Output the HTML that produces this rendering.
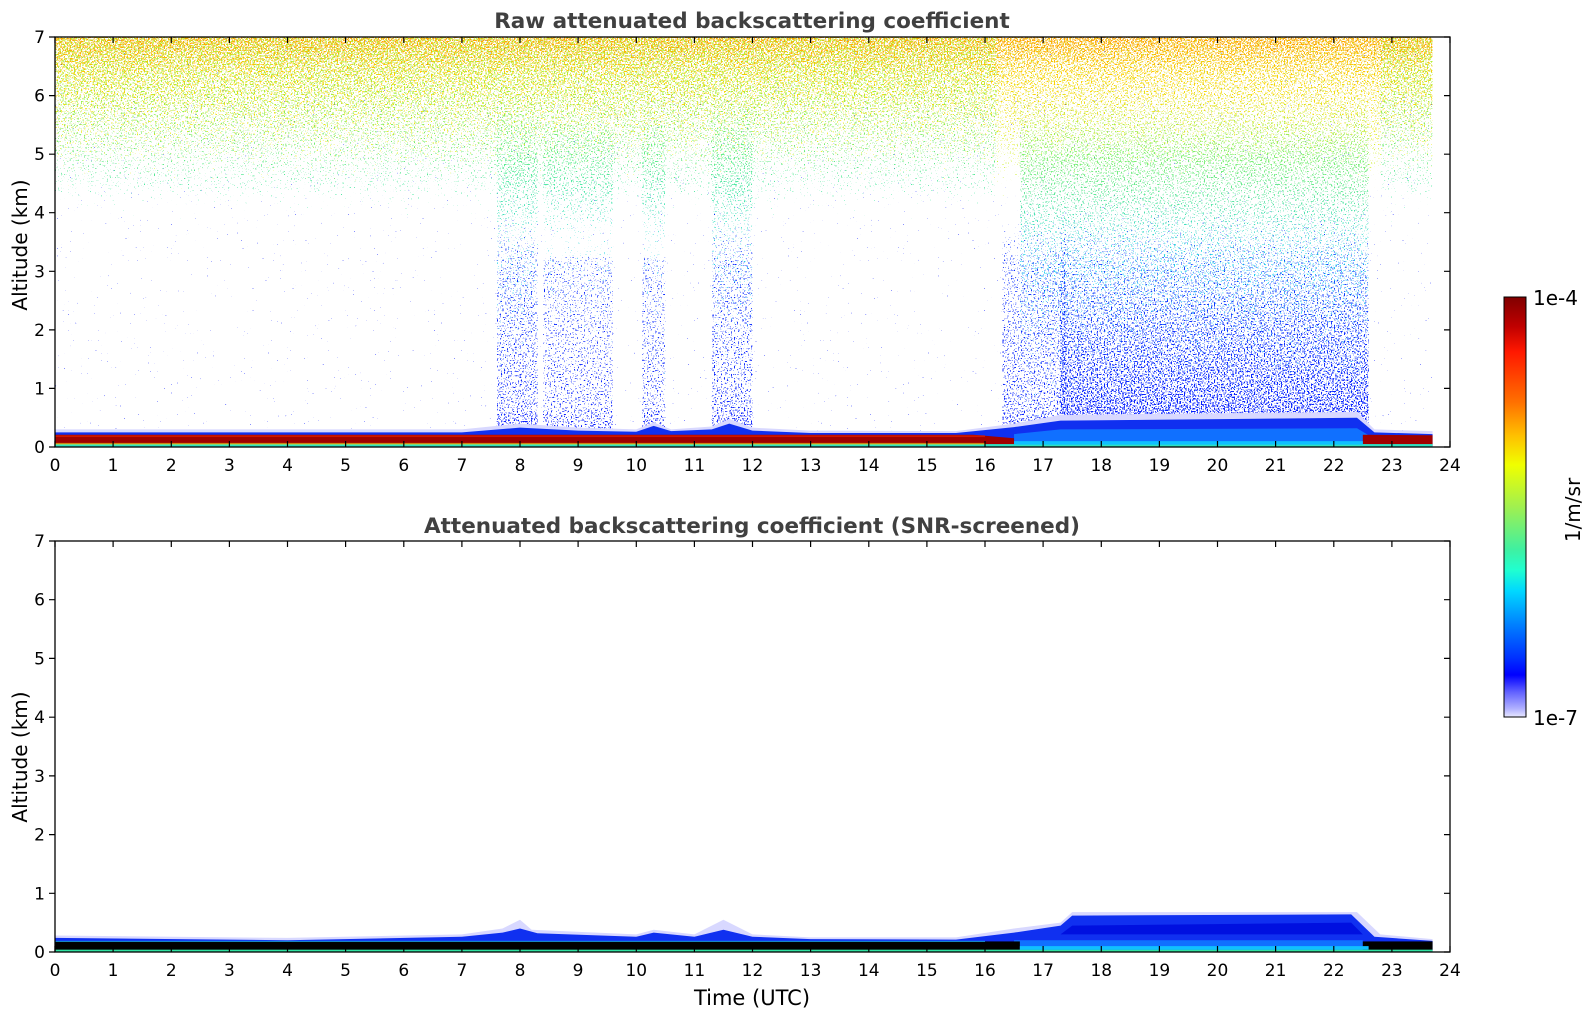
<!DOCTYPE html>
<html><head><meta charset="utf-8"><style>
html,body{margin:0;padding:0;background:#fff}
svg{display:block}
text{font-family:"DejaVu Sans","Liberation Sans",sans-serif}
</style></head><body>
<svg width="1595" height="1020" viewBox="0 0 1595 1020" xmlns="http://www.w3.org/2000/svg">
<defs>
<filter id="d1" x="0" y="0" width="1" height="1" color-interpolation-filters="sRGB"><feTurbulence type="fractalNoise" baseFrequency="0.7" numOctaves="1" seed="1" result="n"/><feColorMatrix in="n" type="matrix" values="0 0 0 0 0 0 0 0 0 0 0 0 0 0 0 0.5 0 0 0 0" result="nr"/><feComposite in="SourceAlpha" in2="nr" operator="arithmetic" k1="0" k2="0.2" k3="1" k4="0" result="sum"/><feColorMatrix in="sum" type="matrix" values="0 0 0 0 0 0 0 0 0 0 0 0 0 0 0 0 0 0 60 -26.7" result="m"/><feColorMatrix in="SourceGraphic" type="matrix" values="1 0 0 0 0 0 1 0 0 0 0 0 1 0 0 0 0 0 0 1" result="op"/><feComposite in="op" in2="m" operator="in"/></filter>
<filter id="d2" x="0" y="0" width="1" height="1" color-interpolation-filters="sRGB"><feTurbulence type="fractalNoise" baseFrequency="0.7" numOctaves="1" seed="7" result="n"/><feColorMatrix in="n" type="matrix" values="0 0 0 0 0 0 0 0 0 0 0 0 0 0 0 0.5 0 0 0 0" result="nr"/><feComposite in="SourceAlpha" in2="nr" operator="arithmetic" k1="0" k2="0.2" k3="1" k4="0" result="sum"/><feColorMatrix in="sum" type="matrix" values="0 0 0 0 0 0 0 0 0 0 0 0 0 0 0 0 0 0 60 -26.7" result="m"/><feColorMatrix in="SourceGraphic" type="matrix" values="1 0 0 0 0 0 1 0 0 0 0 0 1 0 0 0 0 0 0 1" result="op"/><feComposite in="op" in2="m" operator="in"/></filter>
<filter id="d3" x="0" y="0" width="1" height="1" color-interpolation-filters="sRGB"><feTurbulence type="fractalNoise" baseFrequency="0.7" numOctaves="1" seed="13" result="n"/><feColorMatrix in="n" type="matrix" values="0 0 0 0 0 0 0 0 0 0 0 0 0 0 0 0.5 0 0 0 0" result="nr"/><feComposite in="SourceAlpha" in2="nr" operator="arithmetic" k1="0" k2="0.2" k3="1" k4="0" result="sum"/><feColorMatrix in="sum" type="matrix" values="0 0 0 0 0 0 0 0 0 0 0 0 0 0 0 0 0 0 60 -26.7" result="m"/><feColorMatrix in="SourceGraphic" type="matrix" values="1 0 0 0 0 0 1 0 0 0 0 0 1 0 0 0 0 0 0 1" result="op"/><feComposite in="op" in2="m" operator="in"/></filter>
<linearGradient id="gY" gradientUnits="userSpaceOnUse" x1="0" y1="0" x2="0" y2="7"><stop offset="0.57" stop-color="#e8f020" stop-opacity="0"/><stop offset="0.714" stop-color="#e8f020" stop-opacity="0.5"/><stop offset="0.9" stop-color="#ffd000" stop-opacity="0.8"/><stop offset="1" stop-color="#ffa000" stop-opacity="1"/></linearGradient>
<linearGradient id="gG" gradientUnits="userSpaceOnUse" x1="0" y1="0" x2="0" y2="7"><stop offset="0.5" stop-color="#40e8b0" stop-opacity="0"/><stop offset="0.643" stop-color="#50e8a0" stop-opacity="0.55"/><stop offset="0.857" stop-color="#a0f040" stop-opacity="0.75"/><stop offset="1" stop-color="#c0f030" stop-opacity="0.85"/></linearGradient>
<linearGradient id="gRY" gradientUnits="userSpaceOnUse" x1="0" y1="0" x2="0" y2="7"><stop offset="0.5" stop-color="#c0f030" stop-opacity="0"/><stop offset="0.7" stop-color="#d0f030" stop-opacity="0.55"/><stop offset="1" stop-color="#e0e020" stop-opacity="0.7"/></linearGradient>
<linearGradient id="gRC" gradientUnits="userSpaceOnUse" x1="0" y1="0" x2="0" y2="7"><stop offset="0.14" stop-color="#10a0ff" stop-opacity="0.45"/><stop offset="0.43" stop-color="#20d0f0" stop-opacity="0.66"/><stop offset="0.71" stop-color="#60f090" stop-opacity="0.58"/><stop offset="0.86" stop-color="#90f060" stop-opacity="0"/></linearGradient>
<linearGradient id="gRB" gradientUnits="userSpaceOnUse" x1="0" y1="0" x2="0" y2="7"><stop offset="0.04" stop-color="#0010ff" stop-opacity="1"/><stop offset="0.1" stop-color="#0020ff" stop-opacity="0.85"/><stop offset="0.29" stop-color="#1040ff" stop-opacity="0.7"/><stop offset="0.45" stop-color="#1060ff" stop-opacity="0.45"/><stop offset="0.6" stop-color="#1060ff" stop-opacity="0"/></linearGradient>
<linearGradient id="gPB" gradientUnits="userSpaceOnUse" x1="0" y1="0" x2="0" y2="7"><stop offset="0.04" stop-color="#0010ff" stop-opacity="0.8"/><stop offset="0.1" stop-color="#1030ff" stop-opacity="0.62"/><stop offset="0.43" stop-color="#1040ff" stop-opacity="0.5"/><stop offset="0.6" stop-color="#1060ff" stop-opacity="0"/></linearGradient>
<linearGradient id="gPC" gradientUnits="userSpaceOnUse" x1="0" y1="0" x2="0" y2="7"><stop offset="0.14" stop-color="#10a0ff" stop-opacity="0.35"/><stop offset="0.43" stop-color="#20d0f0" stop-opacity="0.56"/><stop offset="0.71" stop-color="#60f090" stop-opacity="0.45"/><stop offset="0.85" stop-color="#60f090" stop-opacity="0"/></linearGradient>
<linearGradient id="cb" x1="0" y1="0" x2="0" y2="1">
<stop offset="0" stop-color="#800000"/><stop offset="0.07" stop-color="#c00000"/><stop offset="0.13" stop-color="#ff1800"/><stop offset="0.25" stop-color="#ff7000"/><stop offset="0.33" stop-color="#ffc000"/><stop offset="0.4" stop-color="#f0ff00"/><stop offset="0.5" stop-color="#a0f050"/><stop offset="0.6" stop-color="#40f0a0"/><stop offset="0.65" stop-color="#20ffd0"/><stop offset="0.7" stop-color="#00d8ff"/><stop offset="0.78" stop-color="#0080ff"/><stop offset="0.86" stop-color="#0030ff"/><stop offset="0.9" stop-color="#0000ff"/><stop offset="0.94" stop-color="#6060ff"/><stop offset="0.98" stop-color="#b0b0ff"/><stop offset="1" stop-color="#e8e8ff"/></linearGradient>
</defs>

<!-- ===== TOP PLOT ===== -->
<g filter="url(#d1)"><g transform="translate(55,447) scale(58.125,-58.57)">
<rect x="0" y="3.5" width="23.7" height="3.5" fill="url(#gY)"/>
</g></g>
<g filter="url(#d2)"><g transform="translate(55,447) scale(58.125,-58.57)">
<rect x="0" y="3" width="16.2" height="4" fill="url(#gG)"/>
<rect x="22.8" y="3" width="0.9" height="4" fill="url(#gG)"/>
<rect x="16.2" y="3" width="6.6" height="4" fill="url(#gRY)"/>
<rect x="16.6" y="0.5" width="6" height="5.8" fill="url(#gRC)"/>
<rect x="7.6" y="0.5" width="0.7" height="5.5" fill="url(#gPC)"/>
<rect x="8.4" y="0.5" width="1.2" height="5" fill="url(#gPC)" opacity="0.85"/>
<rect x="10.1" y="0.5" width="0.4" height="5" fill="url(#gPC)" opacity="0.9"/>
<rect x="11.3" y="0.5" width="0.7" height="5.5" fill="url(#gPC)"/>
</g></g>
<g filter="url(#d3)"><g transform="translate(55,447) scale(58.125,-58.57)">
<rect x="7.6" y="0.25" width="0.7" height="4" fill="url(#gPB)"/>
<rect x="8.4" y="0.25" width="1.2" height="3" fill="url(#gPB)" opacity="0.88"/>
<rect x="10.1" y="0.25" width="0.4" height="3" fill="url(#gPB)" opacity="0.92"/>
<rect x="11.3" y="0.25" width="0.7" height="4" fill="url(#gPB)"/>
<rect x="16.3" y="0.3" width="1.1" height="3.5" fill="url(#gPB)"/>
<rect x="17.3" y="0.3" width="5.3" height="4" fill="url(#gRB)"/>
<rect x="0" y="0.25" width="23.7" height="6.75" fill="#1020ff" opacity="0.3"/>
</g></g>
<g transform="translate(55,447) scale(58.125,-58.57)">
<path d="M0,0.3 L7,0.3 L8,0.4 L9,0.33 L10,0.3 L10.3,0.42 L10.6,0.3 L11.3,0.35 L11.6,0.48 L12,0.33 L13,0.28 L15.5,0.27 L16.5,0.4 L17.3,0.55 L22.4,0.6 L22.7,0.3 L23.7,0.27 L23.7,0 L0,0 Z" fill="#d8d8ff"/>
<path d="M0,0.25 L7,0.25 L8,0.33 L9,0.28 L10,0.26 L10.3,0.36 L10.6,0.27 L11.3,0.3 L11.6,0.4 L12,0.28 L13,0.24 L15.5,0.24 L16.5,0.34 L17.3,0.45 L22.4,0.5 L22.7,0.25 L23.7,0.22 L23.7,0 L0,0 Z" fill="#1030f0"/>
<path d="M16.5,0.22 L17.3,0.3 L22.4,0.32 L22.6,0.2 L22.6,0 L16.5,0 Z" fill="#1070ff"/>
<path d="M0,0.21 L15.8,0.21 L16.5,0.15 L16.5,0.04 L0,0.04 Z" fill="#a00000"/>
<path d="M22.5,0.21 L23.7,0.2 L23.7,0.02 L22.5,0.05 Z" fill="#a00000"/>
<rect x="0" y="0.17" width="16" height="0.03" fill="#e02000" opacity="0.7"/>
<rect x="0" y="0" width="23.7" height="0.05" fill="#30e0c0"/>
<rect x="16.5" y="0.04" width="6" height="0.06" fill="#10c0ff"/>
<rect x="0" y="0.04" width="16" height="0.03" fill="#f0e020" opacity="0.6"/>
</g>
<rect x="55" y="37" width="1395" height="410" fill="none" stroke="#000" stroke-width="1.3"/>

<!-- ===== BOTTOM PLOT ===== -->
<g transform="translate(55,952) scale(58.125,-58.71)">
<path d="M0,0.28 L4,0.24 L7,0.3 L7.7,0.4 L8,0.55 L8.2,0.38 L10,0.3 L10.3,0.38 L11,0.3 L11.5,0.55 L12,0.3 L13,0.25 L15.5,0.25 L16.5,0.4 L17.3,0.5 L17.5,0.68 L22.4,0.68 L22.8,0.3 L23.7,0.22 L23.7,0 L0,0 Z" fill="#d8d8ff"/>
<path d="M0,0.24 L4,0.2 L7,0.26 L7.7,0.33 L8,0.4 L8.3,0.32 L10,0.26 L10.3,0.33 L11,0.26 L11.5,0.38 L12,0.26 L13,0.22 L15.5,0.21 L16.5,0.33 L17.3,0.45 L17.5,0.62 L22.3,0.64 L22.7,0.26 L23.7,0.19 L23.7,0 L0,0 Z" fill="#1030f0"/>
<path d="M17.5,0.45 L22.3,0.5 L22.5,0.3 L17.3,0.3 Z" fill="#0010e0"/>
<path d="M16.5,0.2 L22.5,0.2 L22.5,0 L16.5,0 Z" fill="#1070ff"/>
<rect x="0" y="0.03" width="16.6" height="0.15" fill="#000"/>
<rect x="22.5" y="0.03" width="1.2" height="0.15" fill="#000"/>
<rect x="0" y="0" width="23.7" height="0.04" fill="#30e0a0"/>
<rect x="16.6" y="0.04" width="6" height="0.06" fill="#10c0ff"/>
<rect x="0" y="0.17" width="16" height="0.02" fill="#20d0ff" opacity="0.6"/>
</g>
<rect x="55" y="541" width="1395" height="411" fill="none" stroke="#000" stroke-width="1.3"/>

<g stroke="#000" stroke-width="1.2">
<path d="M55,447v-6M113.1,447v-6M171.3,447v-6M229.4,447v-6M287.5,447v-6M345.6,447v-6M403.8,447v-6M461.9,447v-6M520,447v-6M578.1,447v-6M636.3,447v-6M694.4,447v-6M752.5,447v-6M810.6,447v-6M868.8,447v-6M926.9,447v-6M985,447v-6M1043.1,447v-6M1101.3,447v-6M1159.4,447v-6M1217.5,447v-6M1275.6,447v-6M1333.8,447v-6M1391.9,447v-6M1450,447v-6"/>
<path d="M55,37v6M113.1,37v6M171.3,37v6M229.4,37v6M287.5,37v6M345.6,37v6M403.8,37v6M461.9,37v6M520,37v6M578.1,37v6M636.3,37v6M694.4,37v6M752.5,37v6M810.6,37v6M868.8,37v6M926.9,37v6M985,37v6M1043.1,37v6M1101.3,37v6M1159.4,37v6M1217.5,37v6M1275.6,37v6M1333.8,37v6M1391.9,37v6M1450,37v6"/>
<path d="M55,952v-6M113.1,952v-6M171.3,952v-6M229.4,952v-6M287.5,952v-6M345.6,952v-6M403.8,952v-6M461.9,952v-6M520,952v-6M578.1,952v-6M636.3,952v-6M694.4,952v-6M752.5,952v-6M810.6,952v-6M868.8,952v-6M926.9,952v-6M985,952v-6M1043.1,952v-6M1101.3,952v-6M1159.4,952v-6M1217.5,952v-6M1275.6,952v-6M1333.8,952v-6M1391.9,952v-6M1450,952v-6"/>
<path d="M55,541v6M113.1,541v6M171.3,541v6M229.4,541v6M287.5,541v6M345.6,541v6M403.8,541v6M461.9,541v6M520,541v6M578.1,541v6M636.3,541v6M694.4,541v6M752.5,541v6M810.6,541v6M868.8,541v6M926.9,541v6M985,541v6M1043.1,541v6M1101.3,541v6M1159.4,541v6M1217.5,541v6M1275.6,541v6M1333.8,541v6M1391.9,541v6M1450,541v6"/>
<path d="M49,447h6M49,388.4h6M49,329.9h6M49,271.3h6M49,212.7h6M49,154.2h6M49,95.6h6M49,37h6"/>
<path d="M1450,447h-6M1450,388.4h-6M1450,329.9h-6M1450,271.3h-6M1450,212.7h-6M1450,154.2h-6M1450,95.6h-6M1450,37h-6"/>
<path d="M49,952h6M49,893.3h6M49,834.6h6M49,775.9h6M49,717.2h6M49,658.4h6M49,599.7h6M49,541h6"/>
<path d="M1450,952h-6M1450,893.3h-6M1450,834.6h-6M1450,775.9h-6M1450,717.2h-6M1450,658.4h-6M1450,599.7h-6M1450,541h-6"/>
</g>

<g font-size="17" fill="#000" text-anchor="middle">
<text x="55" y="471">0</text><text x="113.1" y="471">1</text><text x="171.3" y="471">2</text><text x="229.4" y="471">3</text><text x="287.5" y="471">4</text><text x="345.6" y="471">5</text><text x="403.8" y="471">6</text><text x="461.9" y="471">7</text><text x="520" y="471">8</text><text x="578.1" y="471">9</text><text x="636.3" y="471">10</text><text x="694.4" y="471">11</text><text x="752.5" y="471">12</text><text x="810.6" y="471">13</text><text x="868.8" y="471">14</text><text x="926.9" y="471">15</text><text x="985" y="471">16</text><text x="1043.1" y="471">17</text><text x="1101.3" y="471">18</text><text x="1159.4" y="471">19</text><text x="1217.5" y="471">20</text><text x="1275.6" y="471">21</text><text x="1333.8" y="471">22</text><text x="1391.9" y="471">23</text><text x="1450" y="471">24</text>
<g transform="translate(0,505)">
<text x="55" y="471">0</text><text x="113.1" y="471">1</text><text x="171.3" y="471">2</text><text x="229.4" y="471">3</text><text x="287.5" y="471">4</text><text x="345.6" y="471">5</text><text x="403.8" y="471">6</text><text x="461.9" y="471">7</text><text x="520" y="471">8</text><text x="578.1" y="471">9</text><text x="636.3" y="471">10</text><text x="694.4" y="471">11</text><text x="752.5" y="471">12</text><text x="810.6" y="471">13</text><text x="868.8" y="471">14</text><text x="926.9" y="471">15</text><text x="985" y="471">16</text><text x="1043.1" y="471">17</text><text x="1101.3" y="471">18</text><text x="1159.4" y="471">19</text><text x="1217.5" y="471">20</text><text x="1275.6" y="471">21</text><text x="1333.8" y="471">22</text><text x="1391.9" y="471">23</text><text x="1450" y="471">24</text>
</g>
</g>
<g font-size="17" fill="#000" text-anchor="end">
<text x="45" y="453">0</text><text x="45" y="394.4">1</text><text x="45" y="335.9">2</text><text x="45" y="277.3">3</text><text x="45" y="218.7">4</text><text x="45" y="160.2">5</text><text x="45" y="101.6">6</text><text x="45" y="43">7</text>
<text x="45" y="958">0</text><text x="45" y="899.3">1</text><text x="45" y="840.6">2</text><text x="45" y="781.9">3</text><text x="45" y="723.2">4</text><text x="45" y="664.4">5</text><text x="45" y="605.7">6</text><text x="45" y="547">7</text>
</g>

<text x="752" y="28" font-size="21.5" font-weight="bold" fill="#404040" text-anchor="middle">Raw attenuated backscattering coefficient</text>
<text x="752" y="533" font-size="21.5" font-weight="bold" fill="#404040" text-anchor="middle">Attenuated backscattering coefficient (SNR-screened)</text>
<text transform="translate(27,245) rotate(-90)" font-size="20" text-anchor="middle">Altitude (km)</text>
<text transform="translate(27,757) rotate(-90)" font-size="20" text-anchor="middle">Altitude (km)</text>
<text x="752" y="1005" font-size="21" text-anchor="middle">Time (UTC)</text>

<rect x="1504" y="297" width="22" height="420" fill="url(#cb)" stroke="#000" stroke-width="1"/>
<text x="1533" y="305" font-size="20">1e-4</text>
<text x="1533" y="725" font-size="20">1e-7</text>
<text transform="translate(1580,510) rotate(-90)" font-size="20" text-anchor="middle">1/m/sr</text>
</svg>
</body></html>
